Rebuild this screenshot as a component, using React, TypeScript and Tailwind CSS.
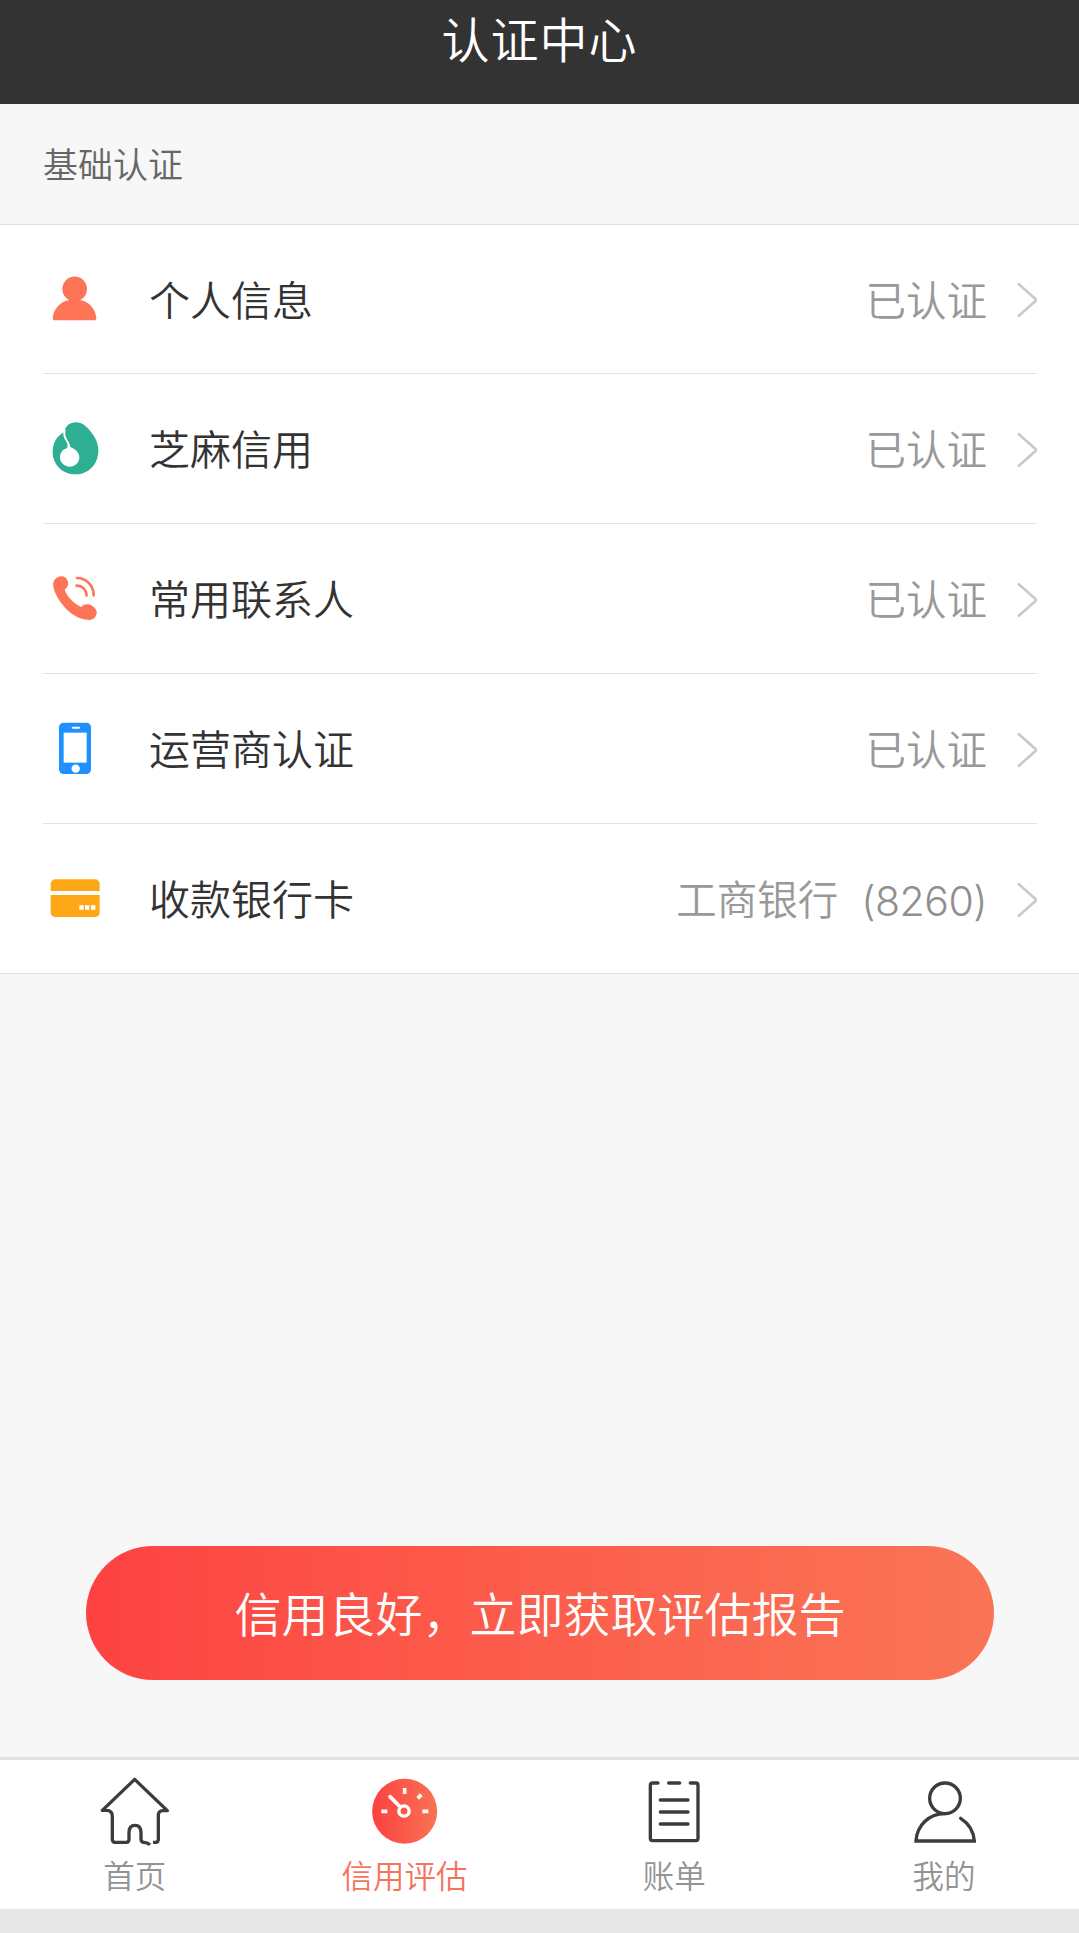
import type { ReactNode } from "react";

const ICON = "h-[52px] w-[52px] shrink-0 overflow-visible";
const TAB_ICON = "h-[72px] w-[72px] overflow-visible";

const PersonIcon = () => (
  <svg viewBox="57 69 156 156" className={ICON} fill="#fd7556">
    <ellipse cx="134" cy="117" rx="37" ry="37.5" />
    <path d="M118 150h32c26 4 46 26 49 53 0 5-2 8-6 8H74c-4 0-6-3-6-8 3-27 24-49 50-53z" />
  </svg>
);

const SesameIcon = () => (
  <svg viewBox="57 519 156 156" className={ICON}>
    <path
      d="M137 517c18 0 30 10 43 25 15 17 25 37 25 60 0 40-29 71-68 71s-69-29-69-68c0-26 12-46 34-59 5-18 17-29 35-29z"
      fill="#2eae93"
    />
    <path d="M104 538c-3 14-1 24 5 32 6 8 9 13 9 24" fill="none" stroke="#fff" strokeWidth="6" />
    <path d="M113 582c3 8 12 10 21 16 9 7 14 14 14 24 0 17-13 28-29 28s-29-12-29-28c0-14 9-24 20-27 3-3 3-8 3-13z" fill="#fff" />
  </svg>
);

const CallIcon = () => (
  <svg viewBox="57 69 156 156" className={ICON} fill="none" stroke="#fd7556" strokeWidth="8" strokeLinecap="round">
    <path
      d="M71 94c4-9 13-15 24-15 9 0 16 6 19 17 2 9-1 15-10 23 7 20 26 41 50 52 4-6 12-10 21-8 12 3 24 12 25 23 1 12-9 24-22 24-32 0-62-20-84-50-16-22-29-49-23-66z"
      fill="#fd7556"
      stroke="none"
    />
    <path d="M141 84c27 0 50 22 50 52M140 107c17 0 29 12 30 29" />
  </svg>
);

const MobileIcon = () => (
  <svg viewBox="57 519 156 156" className={ICON} fill="#fff">
    <rect x="87" y="518" width="96" height="154" rx="14" fill="#1e90ff" />
    <rect x="101" y="548" width="69" height="90" />
    <rect x="125" y="530" width="25" height="6" rx="3" />
    <circle cx="137" cy="656" r="12.5" />
  </svg>
);

const CardIcon = () => (
  <svg viewBox="57 969 156 156" className={ICON} fill="#ffa817">
    <path d="M62 1023v-20c0-9 6-15 15-15h117c9 0 15 6 15 15v20z" />
    <path d="M62 1035h147v51c0 9-6 15-15 15H77c-9 0-15-6-15-15z" />
    <path d="M148 1066h13v13h-13zM165 1066h13v13h-13zM183 1066h13v13h-13z" fill="#fff" />
  </svg>
);

const Chevron = () => (
  <svg
    viewBox="0 0 21 36"
    className="mt-[2px] ml-[29px] h-9 w-[21px] shrink-0"
    fill="none"
    stroke="#c9c9c9"
    strokeWidth="2.6"
  >
    <path d="M2 1.5 19.5 17a1.4 1.4 0 0 1 0 2L2 34.5" />
  </svg>
);

const HomeIcon = () => (
  <svg viewBox="57 108 216 216" className={TAB_ICON} fill="none" stroke="#3c3c3c" strokeWidth="10" strokeLinejoin="round">
    <path d="M219 307h8c6 0 8-3 8-9v-71c0-11 4-15 14-15h13L164 118 67 211h12c13 0 18 6 18 18v69c0 6 2 9 8 9h34c6 0 8-3 8-9v-20c0-13 6-22 18-22s18 9 18 22v20c0 6 3 9 9 9 8 0 12 2 18 7" />
  </svg>
);

const GaugeIcon = () => (
  <svg viewBox="866 108 216 216" className={TAB_ICON} fill="none" stroke="#fff" strokeWidth="11">
    <defs>
      <linearGradient id="gauge" x1="0" x2="1">
        <stop offset="0" stopColor="#fd4141" />
        <stop offset="1" stopColor="#f97355" />
      </linearGradient>
    </defs>
    <circle cx="973" cy="214" r="97.5" fill="url(#gauge)" stroke="none" />
    <circle cx="971" cy="213" r="15.5" strokeWidth="10" />
    <path d="M929 170l31 31" strokeLinecap="round" />
    <path d="M973 144v18M1012 175l11-11M903 214h18M1026 214h18" />
  </svg>
);

const BillIcon = () => (
  <svg
    viewBox="115 108 216 216"
    className={TAB_ICON}
    fill="none"
    stroke="#3c3c3c"
    strokeWidth="10"
    strokeLinecap="round"
    strokeLinejoin="round"
  >
    <path d="M175 129h-16c-5 0-7 2-7 7v159c0 5 2 7 7 7h130c4 0 6-2 6-7V136c0-5-2-7-6-7h-17M207 129h33" />
    <path d="M182 180h83M182 216h83M182 252h83" />
  </svg>
);

const UserIcon = () => (
  <svg viewBox="924 108 216 216" className={TAB_ICON} fill="none" stroke="#3c3c3c" strokeWidth="10">
    <circle cx="1035" cy="175" r="46" />
    <path d="M1035 221c-47 0-84 34-87 82h175c-2-28-16-52-41-68" strokeLinecap="round" />
  </svg>
);

type Item = { icon: ReactNode; label: string; value: string; tail?: string };

const items: Item[] = [
  { icon: <PersonIcon />, label: "个人信息", value: "已认证" },
  { icon: <SesameIcon />, label: "芝麻信用", value: "已认证" },
  { icon: <CallIcon />, label: "常用联系人", value: "已认证" },
  { icon: <MobileIcon />, label: "运营商认证", value: "已认证" },
  { icon: <CardIcon />, label: "收款银行卡", value: "工商银行", tail: "(8260)" },
];

const tabs = [
  { icon: <HomeIcon />, label: "首页", active: false },
  { icon: <GaugeIcon />, label: "信用评估", active: true },
  { icon: <BillIcon />, label: "账单", active: false },
  { icon: <UserIcon />, label: "我的", active: false },
];

const App = () => {
  return (
    <div className="flex h-[1933px] w-[1079px] flex-col bg-[#f7f7f7] font-['Noto_Sans_CJK_SC',sans-serif] font-[350]">
      <header className="flex h-[104px] shrink-0 justify-center bg-[#333333] pt-[2px]">
        <h1 className="text-[48px] leading-[70px] font-[350] tracking-[1px] text-white">认证中心</h1>
      </header>

      <h2 className="h-[120px] shrink-0 pt-[34px] pl-[43px] text-[35px] leading-[50px] font-[350] text-[#666666]">基础认证</h2>

      {/* Verification list */}
      <ul className="h-[750px] shrink-0 border-y border-[#e0e0e0] bg-white pr-[42px] pl-[43px]">
        {items.map((item) => (
          <li
            key={item.label}
            className="flex h-[150px] items-center border-b border-[#e2e2e2] pl-[6px] text-[41px] leading-[60px] first:h-[149px] last:h-[149px] last:border-b-0"
          >
            {item.icon}
            <span className="mb-[3px] ml-[48px] text-[#333333]">{item.label}</span>
            <span className="mb-[1px] ml-auto text-[40.5px] text-[#999999]">{item.value}</span>
            {item.tail && (
              <span className="mt-[4px] ml-[23px] font-['Inter'] font-light tracking-[-0.5px] text-[#8f8f8f]">{item.tail}</span>
            )}
            <Chevron />
          </li>
        ))}
      </ul>

      <div className="mt-auto pr-[85px] pb-[77px] pl-[86px]">
        <button className="h-[134px] w-full rounded-full bg-linear-to-r from-[#fd4242] to-[#fa7456] pb-[2px] text-[47px] font-[350] text-white">
          信用良好，立即获取评估报告
        </button>
      </div>

      {/* Bottom tab bar */}
      <nav className="grid h-[152px] shrink-0 grid-cols-4 border-t-[3px] border-[#e2e2e2] bg-white">
        {tabs.map((tab) => (
          <a key={tab.label} className="flex flex-col items-center pt-[16px]">
            {tab.icon}
            <span
              className={`mt-[3px] text-[31.5px] leading-[46px] ${tab.active ? "text-[#f4745c]" : "text-[#939393]"}`}
            >
              {tab.label}
            </span>
          </a>
        ))}
      </nav>
      <div className="h-[24px] shrink-0 bg-[#e7e7e7]" />
    </div>
  );
};

export default App;
